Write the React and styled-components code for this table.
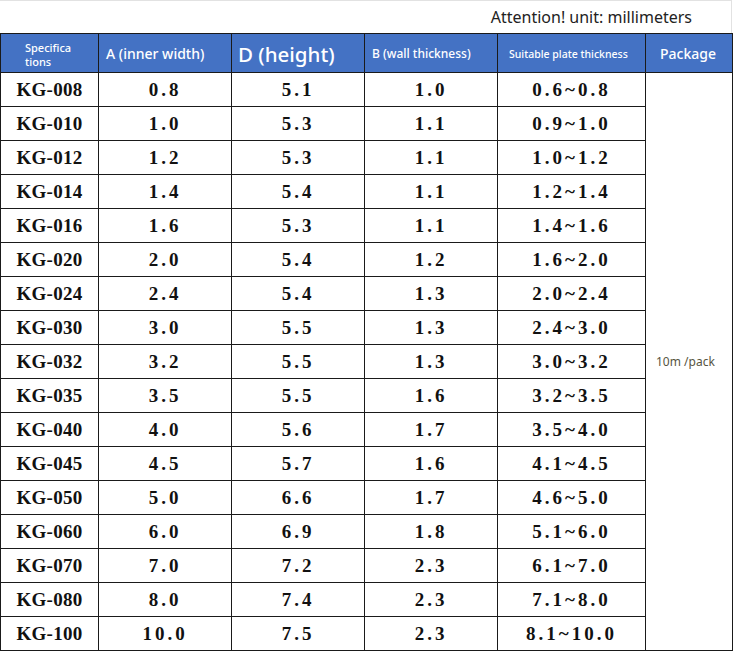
import React from 'react';
import styled, { createGlobalStyle } from 'styled-components';

const rows = [
  ['KG-008', '0.8', '5.1', '1.0', '0.6~0.8'],
  ['KG-010', '1.0', '5.3', '1.1', '0.9~1.0'],
  ['KG-012', '1.2', '5.3', '1.1', '1.0~1.2'],
  ['KG-014', '1.4', '5.4', '1.1', '1.2~1.4'],
  ['KG-016', '1.6', '5.3', '1.1', '1.4~1.6'],
  ['KG-020', '2.0', '5.4', '1.2', '1.6~2.0'],
  ['KG-024', '2.4', '5.4', '1.3', '2.0~2.4'],
  ['KG-030', '3.0', '5.5', '1.3', '2.4~3.0'],
  ['KG-032', '3.2', '5.5', '1.3', '3.0~3.2'],
  ['KG-035', '3.5', '5.5', '1.6', '3.2~3.5'],
  ['KG-040', '4.0', '5.6', '1.7', '3.5~4.0'],
  ['KG-045', '4.5', '5.7', '1.6', '4.1~4.5'],
  ['KG-050', '5.0', '6.6', '1.7', '4.6~5.0'],
  ['KG-060', '6.0', '6.9', '1.8', '5.1~6.0'],
  ['KG-070', '7.0', '7.2', '2.3', '6.1~7.0'],
  ['KG-080', '8.0', '7.4', '2.3', '7.1~8.0'],
  ['KG-100', '10.0', '7.5', '2.3', '8.1~10.0'],
];

const widths = [98, 133, 133, 133, 148, 87];

const GlobalStyle = createGlobalStyle`
  body {
    margin: 0;
    background: #fff;
    font-family: "Noto Sans", "Open Sans", sans-serif;
  }
`;

export default function App() {
  return (
    <Page>
      <GlobalStyle />
      <Notice>Attention! unit: millimeters</Notice>
      <Table>
        <colgroup>
          {widths.map((w, i) => (
            <Col key={i} w={w} />
          ))}
        </colgroup>
        <thead>
          <tr>
            <Head size={11} pad={24} lh={13.5}>Specifica<br />tions</Head>
            <Head size={14} pad={7}>A (inner width)</Head>
            <Head size={20.5} pad={6}>D (height)</Head>
            <Head size={12} pad={7}>B (wall thickness)</Head>
            <Head size={10.5} pad={11}>Suitable plate thickness</Head>
            <Head size={14} pad={0} center>Package</Head>
          </tr>
        </thead>
        <tbody>
          {rows.map((r, i) => (
            <tr key={r[0]}>
              {r.map((v, j) => (
                <Cell key={j} code={j === 0}>{v}</Cell>
              ))}
              {i === 0 && <PackCell rowSpan={rows.length}>10m /pack</PackCell>}
            </tr>
          ))}
        </tbody>
      </Table>
    </Page>
  );
}

const Page = styled.div`
  width: 733px;
  height: 651px;
  overflow: hidden;
`;

const Notice = styled.div`
  box-sizing: border-box;
  width: 732px;
  height: 33px;
  border-top: 1px solid #e2e2e2;
  border-right: 1px solid #e2e2e2;
  display: flex;
  align-items: center;
  justify-content: flex-end;
  padding: 0 39px 0 0;
  font-size: 16px;
  color: #222;
`;

const Table = styled.table`
  border-collapse: collapse;
  table-layout: fixed;
  width: 732px;
`;

const Col = styled.col`
  width: ${p => p.w}px;
`;

const Head = styled.th`
  box-sizing: border-box;
  height: 39px;
  padding: 3px 2px 0 ${p => p.pad}px;
  background: #4472c4;
  color: #fff;
  border: 1px solid #1a1a1a;
  font-weight: 500;
  font-size: ${p => p.size}px;
  line-height: ${p => (p.lh ? `${p.lh}px` : '1.2')};
  text-align: ${p => (p.center ? 'center' : 'left')};
  white-space: nowrap;
`;

const Cell = styled.td`
  box-sizing: border-box;
  height: 34px;
  padding: 0;
  border: 1px solid #1a1a1a;
  text-align: center;
  font-family: "Liberation Serif", "DejaVu Serif", serif;
  font-weight: 700;
  font-size: 19px;
  letter-spacing: ${p => (p.code ? '0.3px' : '3px')};
  color: #111;
`;

const PackCell = styled.td`
  border: 1px solid #1a1a1a;
  padding: 0 0 0 10px;
  font-size: 12px;
  color: #57553f;
  vertical-align: middle;
`;
